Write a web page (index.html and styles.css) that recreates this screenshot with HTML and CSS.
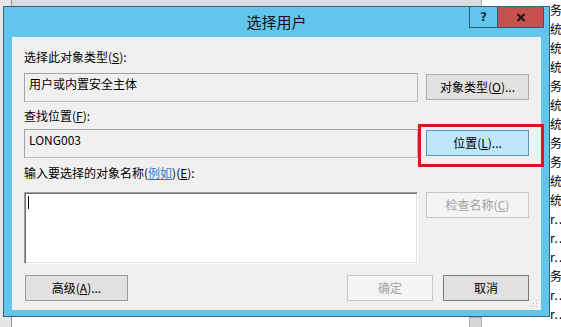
FILE: index.html
```html
<!DOCTYPE html>
<html>
<head>
<meta charset="utf-8">
<link rel="stylesheet" href="styles.css">
</head>
<body>
<div class="desktop">
  <div class="bg-top"></div>
  <div class="bg-left"></div>
  <div class="bg-list">
    <div>务</div><div>统</div><div>统</div><div>统</div><div>务</div><div>统</div><div>统</div><div>务</div><div>务</div><div>统</div><div>统</div><div>r…</div><div>r…</div><div>r…</div><div>务</div><div>r…</div><div>r…</div>
  </div>
  <div class="bg-thumb"></div>

  <div class="dialog">
    <div class="titlebar">
      <span></span>
      <div class="title">选择用户</div>
      <div class="caption-btns">
        <div class="cbtn help">?</div>
        <div class="cbtn close">
          <svg width="10" height="9" viewBox="0 0 10 9"><path d="M1.5 1 L8.5 8 M8.5 1 L1.5 8" stroke="#1b1b1b" stroke-width="2.2" fill="none"/></svg>
        </div>
      </div>
    </div>
    <div class="client">
      <div class="label l1">选择此对象类型(<u>S</u>):</div>
      <div class="row r1">
        <div class="field">用户或内置安全主体</div>
        <div class="btn">对象类型(<u>O</u>)...</div>
      </div>
      <div class="label l2">查找位置(<u>F</u>):</div>
      <div class="row r2">
        <div class="field">LONG003</div>
        <div class="btn hot">位置(<u>L</u>)...</div>
      </div>
      <div class="label l3">输入要选择的对象名称(<span class="link">例如</span>)(<u>E</u>):</div>
      <div class="row r3">
        <div class="edit"><span class="caret"></span></div>
        <div class="btn disabled">检查名称(<u>C</u>)</div>
      </div>
      <div class="footer">
        <div class="btn adv">高级(<u>A</u>)...</div>
        <div class="footer-right">
          <div class="btn sm disabled">确定</div>
          <div class="btn sm default">取消</div>
        </div>
      </div>
      <svg class="grip" width="8" height="8" viewBox="0 0 8 8">
        <rect x="6" y="0" width="1" height="1" fill="#b8b8b8"/>
        <rect x="3" y="3" width="1" height="1" fill="#b8b8b8"/>
        <rect x="6" y="3" width="1" height="1" fill="#b8b8b8"/>
        <rect x="0" y="6" width="1" height="1" fill="#b8b8b8"/>
        <rect x="3" y="6" width="1" height="1" fill="#b8b8b8"/>
        <rect x="6" y="6" width="1" height="1" fill="#b8b8b8"/>
      </svg>
    </div>
    <div class="highlight"></div>
  </div>
</div>
</body>
</html>
```

FILE: styles.css
```css
* { box-sizing: border-box; }

body {
  margin: 0;
  font-family: "Noto Sans CJK SC", "Noto Sans", sans-serif;
  font-size: 12px;
  color: #000;
}

.desktop {
  position: relative;
  width: 561px;
  height: 327px;
  overflow: hidden;
  background: #fff;
}

.bg-top {
  position: absolute;
  left: 0;
  top: 0;
  width: 482px;
  height: 7px;
  background: #d9dce1;
  border-right: 1px solid #a8a8a8;
}

.bg-left {
  position: absolute;
  left: 0;
  top: 0;
  width: 12px;
  height: 327px;
  background: #e4e5e7;
  border-right: 1px solid #9a9a9a;
}

.bg-list {
  position: absolute;
  left: 550px;
  top: 0;
  line-height: 19px;
  font-size: 12px;
  white-space: nowrap;
}

.bg-thumb {
  position: absolute;
  left: 469px;
  top: 317px;
  width: 13px;
  height: 14px;
  background: #d6d6d6;
  border: 1px solid #b0b0b0;
}

.dialog {
  position: absolute;
  left: 3px;
  top: 6px;
  width: 547px;
  height: 311px;
  border: 1px solid #33627a;
  background: #62c6ec;
  display: flex;
  flex-direction: column;
}

.titlebar {
  height: 30px;
  flex: none;
  display: grid;
  grid-template-columns: 1fr auto 1fr;
  align-items: start;
}

.title {
  font-size: 15px;
  line-height: 29px;
  color: #111;
}

.caption-btns {
  justify-self: end;
  display: flex;
  margin-right: 5px;
}

.cbtn {
  height: 21px;
  display: flex;
  align-items: center;
  justify-content: center;
  border-bottom: 1px solid #2f5b72;
  border-left: 1px solid #2f5b72;
}

.help {
  width: 28px;
  font-family: "DejaVu Sans", sans-serif;
  font-weight: bold;
  font-size: 12px;
  color: #15344a;
}

.close {
  width: 47px;
  background: #c75050;
  border-right: 1px solid #2f5b72;
}

.client {
  flex: 1;
  position: relative;
  margin: 0 8px 6px 8px;
  background: #f0f0f0;
  padding: 12px 12px 0 12px;
  display: flex;
  flex-direction: column;
}

.label {
  line-height: 16px;
  height: 16px;
  white-space: nowrap;
}

.l2 { margin-top: 6px; }
.l3 { margin-top: 7px; }

.row {
  display: flex;
  gap: 8px;
  align-items: flex-start;
}

.r1 { margin-top: 8px; }
.r2 { margin-top: 5px; }
.r3 { margin-top: 11px; }

.r1 .btn, .r2 .btn { margin-top: 1px; }

.field {
  width: 394px;
  height: 29px;
  border: 1px solid #a4a4a4;
  border-right-color: #b8b8b8;
  border-bottom-color: #b8b8b8;
  padding: 2px 4px;
  line-height: 16px;
  white-space: nowrap;
}

.edit {
  width: 394px;
  height: 72px;
  background: #fff;
  border: 1px solid;
  border-color: #a0a0a0 #fff #fff #a0a0a0;
  box-shadow: inset 1px 1px #6e6e6e, inset -1px -1px #e3e3e3;
  padding: 3px 2px;
}

.caret {
  display: block;
  margin-left: 1px;
  width: 1px;
  height: 13px;
  background: #000;
}

.btn {
  width: 103px;
  height: 26px;
  flex: none;
  border: 1px solid #adadad;
  background: #e1e1e1;
  text-align: center;
  line-height: 23px;
  white-space: nowrap;
}

.btn.hot {
  background: #bee6fd;
  border-color: #5a93c2;
}

.btn.disabled {
  background: #f4f4f4;
  border-color: #c6c6c6;
  color: #a2a2a2;
}

.btn.default {
  border-color: #7a7a7a;
}

.btn.adv {
  border-color: #9a9a9a;
  margin-left: 1px;
}

.btn.sm { width: 86px; }

.link {
  color: #2a7bd0;
  text-decoration: underline;
}

.footer {
  margin-top: 11px;
  display: flex;
  justify-content: space-between;
}

.footer-right {
  display: flex;
  gap: 10px;
}

.grip {
  position: absolute;
  right: 3px;
  bottom: 2px;
}

.highlight {
  position: absolute;
  left: 414px;
  top: 117px;
  width: 126px;
  height: 43px;
  border: 3px solid #d7161f;
}
```
